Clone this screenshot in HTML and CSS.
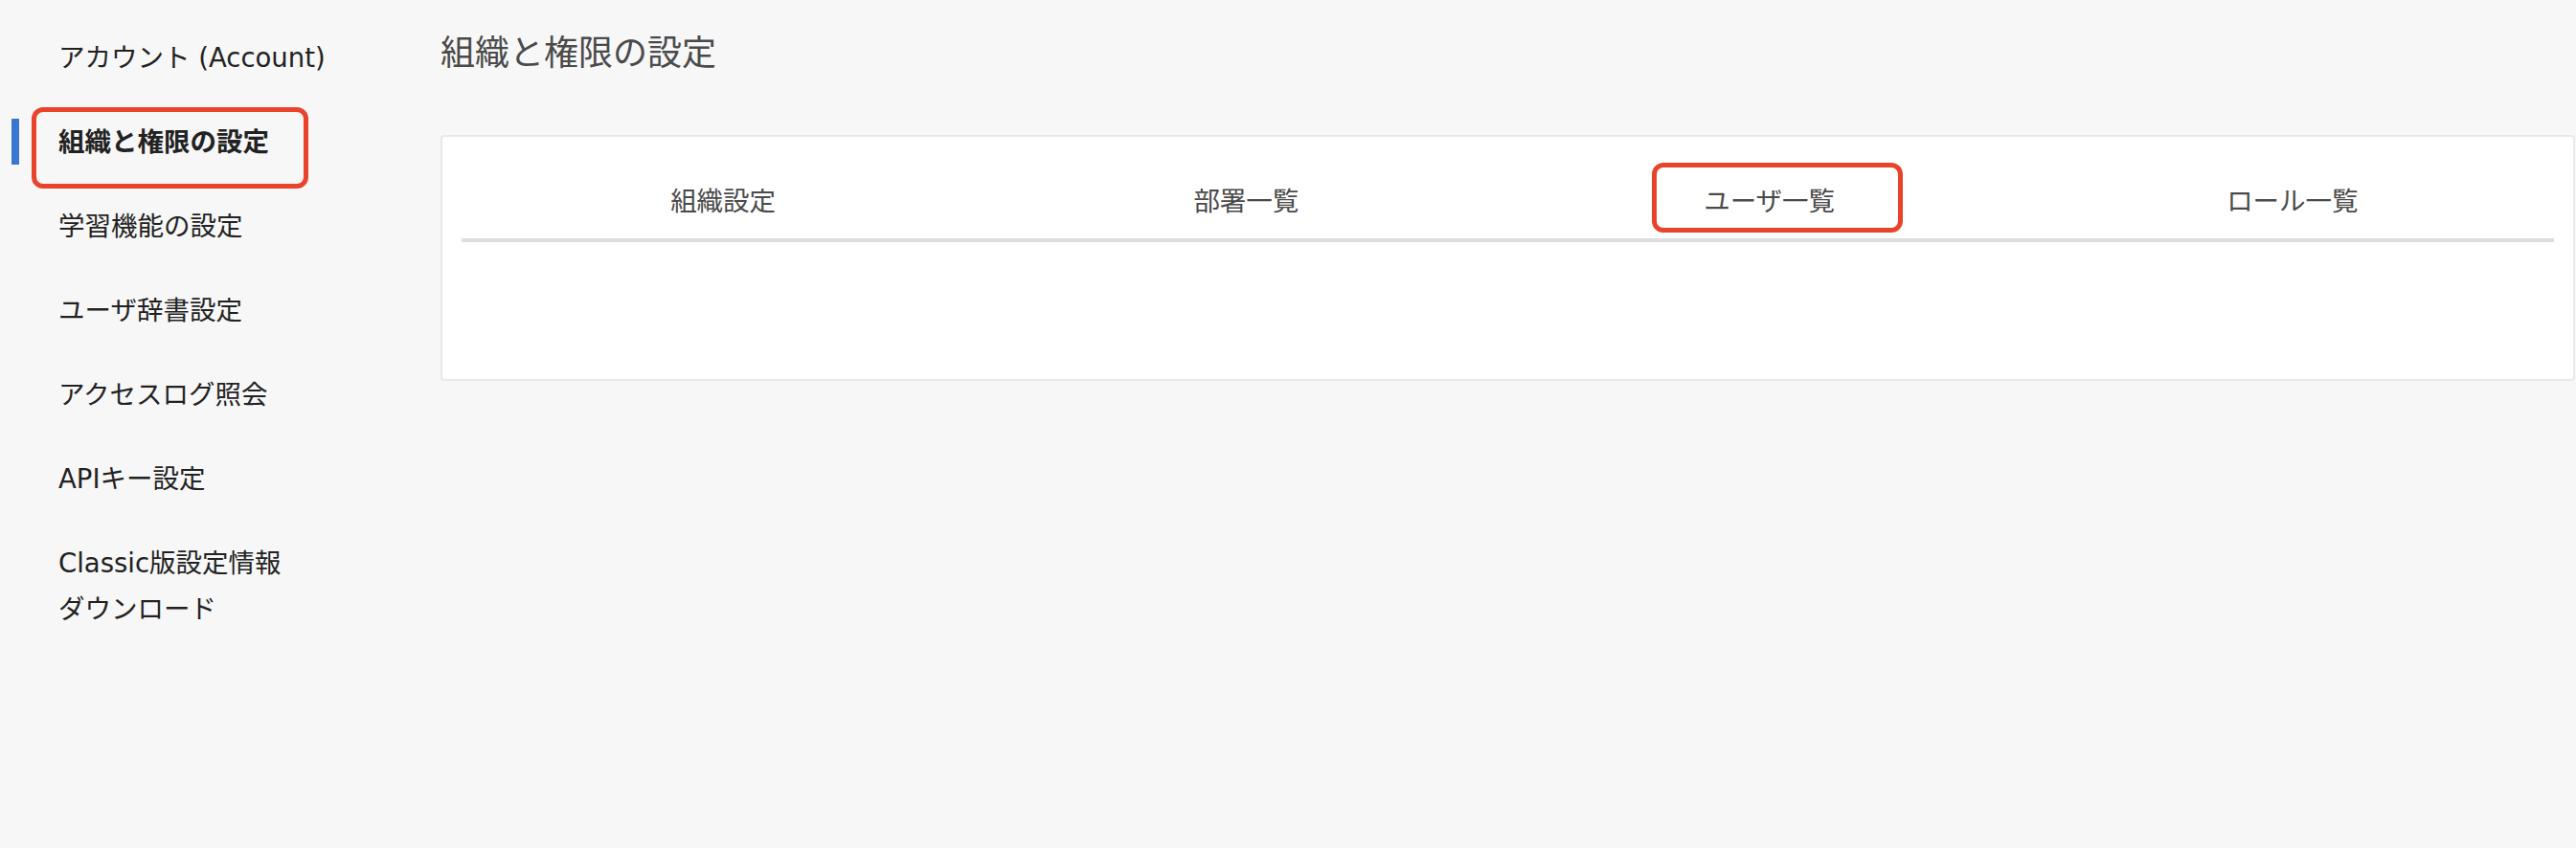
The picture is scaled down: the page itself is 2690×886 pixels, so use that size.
FILE: index.html
```html
<!DOCTYPE html>
<html lang="ja">
<head>
    <meta charset="UTF-8">
    <title>組織と権限の設定</title>
    <link rel="stylesheet" href="styles.css">
</head>
<body>
    <div class="layout">
        <nav class="side">
            <a class="side-item">アカウント (Account)</a>
            <a class="side-item active">組織と権限の設定<span class="annot annot-side"></span></a>
            <a class="side-item">学習機能の設定</a>
            <a class="side-item">ユーザ辞書設定</a>
            <a class="side-item">アクセスログ照会</a>
            <a class="side-item">APIキー設定</a>
            <a class="side-item">Classic版設定情報<br>ダウンロード</a>
        </nav>

        <main class="content">
            <h1 class="page-title">組織と権限の設定</h1>
            <div class="card">
                <div class="tabs">
                    <div class="tab">組織設定</div>
                    <div class="tab">部署一覧</div>
                    <div class="tab">ユーザ一覧<span class="annot annot-tab"></span></div>
                    <div class="tab">ロール一覧</div>
                </div>
                <div class="tab-body"></div>
            </div>
        </main>
    </div>
</body>
</html>
```

FILE: styles.css
```css
body {
    margin: 0;
    background: #f7f7f7;
    font-family: "DejaVu Sans", "Noto Sans CJK JP", sans-serif;
    color: #222;
}
.layout {
    display: flex;
    align-items: flex-start;
}
.side {
    width: 460px;
    flex-shrink: 0;
    padding-top: 16px;
    display: flex;
    flex-direction: column;
}
.side-item {
    position: relative;
    padding: 20px 0 20px 61px;
    font-size: 27.5px;
    line-height: 48px;
    color: #222;
    cursor: pointer;
}
.side-item.active {
    font-weight: bold;
}
.side-item.active::before {
    content: "";
    position: absolute;
    left: 12px;
    top: 20px;
    width: 8px;
    height: 48px;
    background: #3a77d3;
}
.annot {
    position: absolute;
    box-sizing: border-box;
    border: 5px solid #e9432b;
    border-radius: 12px;
    pointer-events: none;
}
.annot-side {
    left: 33px;
    top: 8px;
    width: 289px;
    height: 85px;
}
.content {
    flex: 1;
    min-width: 0;
    padding: 32px 1px 0 0;
}
.page-title {
    margin: 0;
    font-size: 36px;
    line-height: 48px;
    font-weight: normal;
    color: #4a4a4a;
}
.card {
    margin-top: 61px;
    background: white;
    border: 2px solid #e8e8e8;
    border-radius: 4px;
    padding: 20px 20px 20px;
}
.tabs {
    display: grid;
    grid-template-columns: repeat(4, 1fr);
    border-bottom: 4px solid #dedede;
}
.tab {
    position: relative;
    text-align: center;
    padding: 23px 0 15px;
    font-size: 27.5px;
    line-height: 48px;
    color: #4a4a4a;
    cursor: pointer;
}
.annot-tab {
    left: 150px;
    top: 7px;
    width: 262px;
    height: 73px;
}
.tab-body {
    height: 123px;
}
```
